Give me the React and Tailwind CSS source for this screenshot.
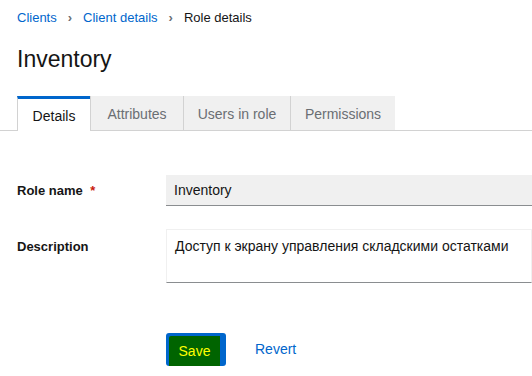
import React from 'react'

const tabs = [
  { name: 'Details', w: 'w-[73px]' },
  { name: 'Attributes', w: 'w-[93px]' },
  { name: 'Users in role', w: 'w-[107px]' },
  { name: 'Permissions', w: 'w-[105px]' },
]

const App = () => {
  return (
    <div className="w-[532px] h-[376px] overflow-hidden bg-white text-[#151515]" style={{ fontFamily: '"Liberation Sans", Arial, sans-serif' }}>
      <div className="px-[17px] pt-[9px]">
        <nav className="flex items-center text-[13px] h-[17px]">
          <span className="text-[#0066cc]">Clients</span>
          <span className="mx-[11px] text-[#6a6e73] text-[13px] font-bold">&#8250;</span>
          <span className="text-[#0066cc]">Client details</span>
          <span className="mx-[11px] text-[#6a6e73] text-[13px] font-bold">&#8250;</span>
          <span>Role details</span>
        </nav>
        <h1 className="mt-[18px] text-[23px] leading-[30px] h-[30px]">Inventory</h1>
      </div>

      <div className="mt-[22px] flex border-b border-[#d2d2d2] h-[35px] pl-[17px]">
        {tabs.map((t, i) => (
          <div
            key={t.name}
            className={
              i === 0
                ? 'w-[73px] h-[35px] -mb-px bg-white border-t-[3px] border-t-[#0066cc] border-l border-l-[#d2d2d2] pt-[2px] flex items-center justify-center text-[14px] text-[#151515]'
                : 'h-[34px] bg-[#f0f0f0] border-l border-[#d2d2d2] pt-[2px] flex items-center justify-center text-[14px] text-[#6a6e73] ' + t.w
            }
          >
            {t.name}
          </div>
        ))}
      </div>

      <div className="pl-[17px] pt-[44px] flex flex-col gap-[23px]">
        <div className="flex items-center">
          <label className="w-[149px] text-[13px] font-bold">
            Role name <span className="text-[#c9190b] ml-[4px]">*</span>
          </label>
          <div className="flex-1 h-[31px] bg-[#f0f0f0] border-b border-[#8a8d90] flex items-center pl-[8px] text-[14px] text-[#151515]">
            Inventory
          </div>
        </div>
        <div className="flex items-start">
          <label className="w-[149px] text-[13px] font-bold pt-[8px]">Description</label>
          <div className="flex-1 h-[54px] bg-white border border-[#f0f0f0] border-b-[#8a8d90] pl-[8px] pt-[6px] text-[14px]">
            Доступ к экрану управления складскими остатками
          </div>
        </div>
      </div>

      <div className="pl-[166px] mt-[50px] flex items-center gap-[29px]">
        <button className="h-[33px] w-[60px] rounded-[3px] bg-[#0066cc] pl-[3px] pt-[3px] pr-[6px] flex">
          <span className="flex-1 bg-[#006400] text-[#ffff00] text-[14px] flex items-center justify-center rounded-tl-[2px]">Save</span>
        </button>
        <span className="text-[#0066cc] text-[14px]">Revert</span>
      </div>
    </div>
  )
}

export default App
